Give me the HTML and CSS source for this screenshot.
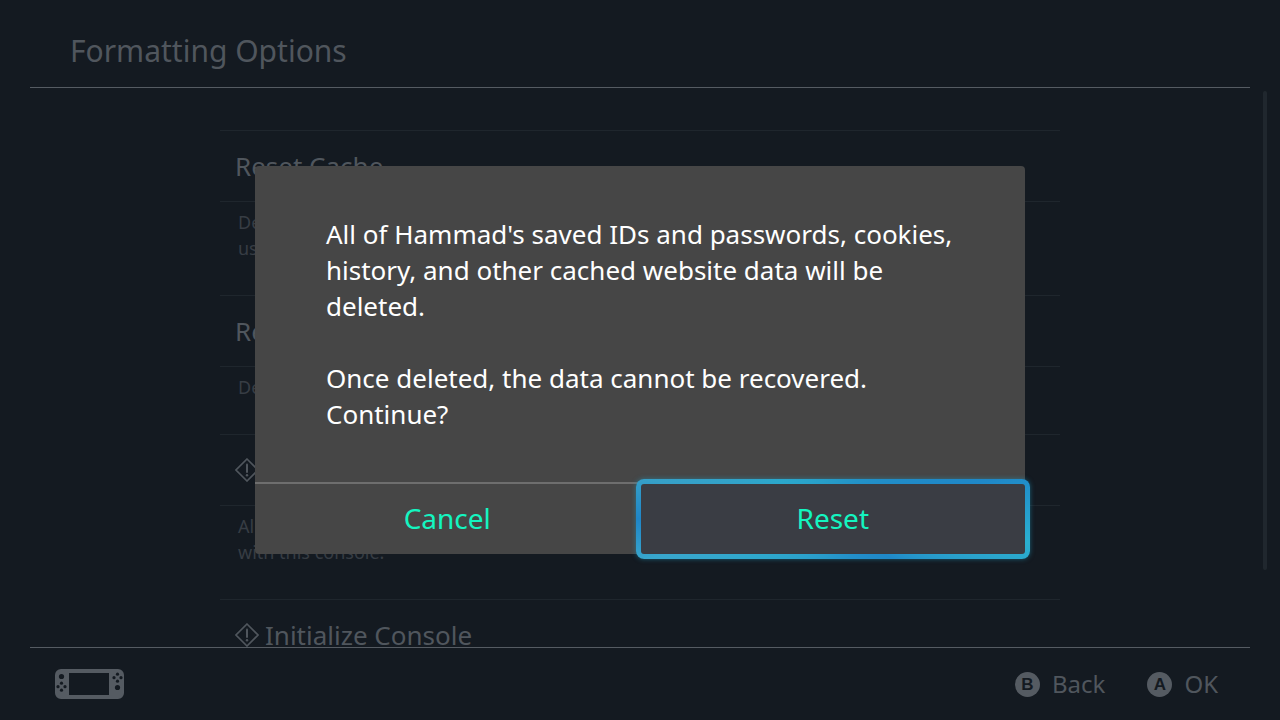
FILE: index.html
```html
<!doctype html>
<html lang="en">
<head>
<meta charset="utf-8">
<title>Formatting Options</title>
<link rel="stylesheet" href="styles.css">
</head>

<body>
<svg class="defs" width="0" height="0" aria-hidden="true">
	<symbol id="warn" viewBox="0 0 24 24">
		<path d="M12 1 L23 12 L12 23 L1 12 Z" fill="none" stroke="currentColor" stroke-width="1.6"/>
		<path d="M12 6.5 V14" stroke="currentColor" stroke-width="2" stroke-linecap="round"/>
		<circle cx="12" cy="17.2" r="1.2" fill="currentColor"/>
	</symbol>
</svg>

<header class="header">
	<h1>Formatting Options</h1>
</header>

<main class="main">
	<div class="list">
		<button class="item" type="button">Reset Cache</button>
		<p class="desc">De<br>us</p>
		<button class="item" type="button">Re</button>
		<p class="desc">De</p>
		<button class="item" type="button" aria-label="Warning"><svg class="warn"><use href="#warn"/></svg></button>
		<p class="desc">Al<br>with this console.</p>
		<button class="item" type="button"><svg class="warn"><use href="#warn"/></svg>Initialize Console</button>
	</div>
	<div class="scroll"></div>
</main>

<footer class="footer">
	<svg class="console" viewBox="0 0 70 30">
		<path fill="currentColor" fill-rule="evenodd" d="M6 0 H63 A6 6 0 0 1 69 6 V24 A6 6 0 0 1 63 30 H6 A6 6 0 0 1 0 24 V6 A6 6 0 0 1 6 0 Z M14 4 V26 H54 V4 Z"/>
		<g fill="#141a21">
			<circle cx="6.5" cy="7.5" r="2.6"/>
			<circle cx="6.5" cy="14.2" r="1.6"/>
			<circle cx="6.5" cy="21.2" r="1.6"/>
			<circle cx="3" cy="17.7" r="1.6"/>
			<circle cx="10" cy="17.7" r="1.6"/>
			<circle cx="62.5" cy="5.2" r="1.6"/>
			<circle cx="62.5" cy="12.2" r="1.6"/>
			<circle cx="59" cy="8.7" r="1.6"/>
			<circle cx="66" cy="8.7" r="1.6"/>
			<circle cx="62.5" cy="18.5" r="2.6"/>
		</g>
	</svg>
	<div class="hints">
		<button class="hint" type="button"><span class="key">B</span>Back</button>
		<button class="hint" type="button"><span class="key">A</span>OK</button>
	</div>
</footer>

<div class="overlay">
	<div class="dialog" role="dialog" aria-modal="true" aria-labelledby="msg">
		<div class="msg" id="msg">
			<p>All of Hammad's saved IDs and passwords, cookies,<br>history, and other cached website data will be<br>deleted.</p>
			<p>Once deleted, the data cannot be recovered.<br>Continue?</p>
		</div>
		<div class="btns">
			<button class="btn" type="button">Cancel</button>
			<button class="btn active" type="button">Reset</button>
		</div>
	</div>
</div>
</body>
</html>
```
FILE: styles.css
```css
*{ margin:0; padding:0; box-sizing:border-box;}
body{ display:flex; flex-direction:column; height:100vh; overflow:hidden; background:#141a21; color:#50565d; font-family:"Noto Sans","Open Sans",sans-serif;}
button{ border:0; background:none; color:inherit; font:inherit; cursor:pointer;}
.defs{ position:absolute;}

.header{ height:88px; margin:0 30px; padding:0 40px; border-bottom:1px solid #555b62; display:flex; align-items:center;}
.header h1{ padding-top:14px; font-size:30px; line-height:36px; font-weight:400;}

.main{ flex:1; min-height:0; overflow:hidden; position:relative; padding-top:42px;}
.list{ max-width:840px; margin:0 auto;}
.item{ display:flex; align-items:center; gap:6px; width:100%; height:72px; padding:0 15px; border-top:1px solid #1f262d; border-bottom:1px solid #1f262d; font-size:26px; text-align:left;}
.warn{ width:24px; height:24px;}
.desc{ padding:7px 18px 34px; font-size:18px; line-height:26px; color:#373d44;}
.scroll{ position:absolute; top:3px; right:13px; bottom:77px; width:4px; border-radius:2px; background:#20272e;}

.footer{ height:73px; margin:0 30px; padding:0 32px 0 25px; border-top:1px solid #555b62; display:flex; align-items:center; justify-content:space-between;}
.console{ width:70px; height:30px; color:#555b62;}
.hints{ display:flex; gap:42px;}
.hint{ display:flex; align-items:center; gap:12px; font-size:24px; line-height:32px;}
.key{ width:25px; height:25px; border-radius:50%; background:#555b62; color:#141a21; font:bold 17px/25px "Liberation Sans",sans-serif; text-align:center;}

.overlay{ position:fixed; top:0; right:0; bottom:0; left:0; display:flex; align-items:center; justify-content:center;}
.dialog{ width:770px; max-width:90%; border-radius:4px; background:#464646; color:#fff;}
.msg{ padding:50px 50px 50px 71px; font-size:26px; line-height:36px;}
.msg p+p{ margin-top:36px;}
.btns{ display:flex; border-top:2px solid #6e6e6e;}
.btn{ flex:1; height:70px; padding-bottom:2px; font-size:28px; line-height:36px; color:#14f5c0;}
.active{ height:80px; margin:-5px -5px -5px -4px; border:5px solid transparent; border-radius:8px; box-shadow:0 0 5px rgba(31,160,200,.5);
	background:linear-gradient(#3a3d44,#3a3d44) padding-box,
	conic-gradient(#269bc8 0deg,#1f88c8 76deg,#2ab0d0 97deg,#2aa4cc 104deg,#1f88c8 124deg,#2ea8cc 245deg,#38a6cc 258deg,#1f86c8 270deg,#36a0c8 282deg,#2ba8cc 304deg,#269bc8 360deg) border-box;}
```
